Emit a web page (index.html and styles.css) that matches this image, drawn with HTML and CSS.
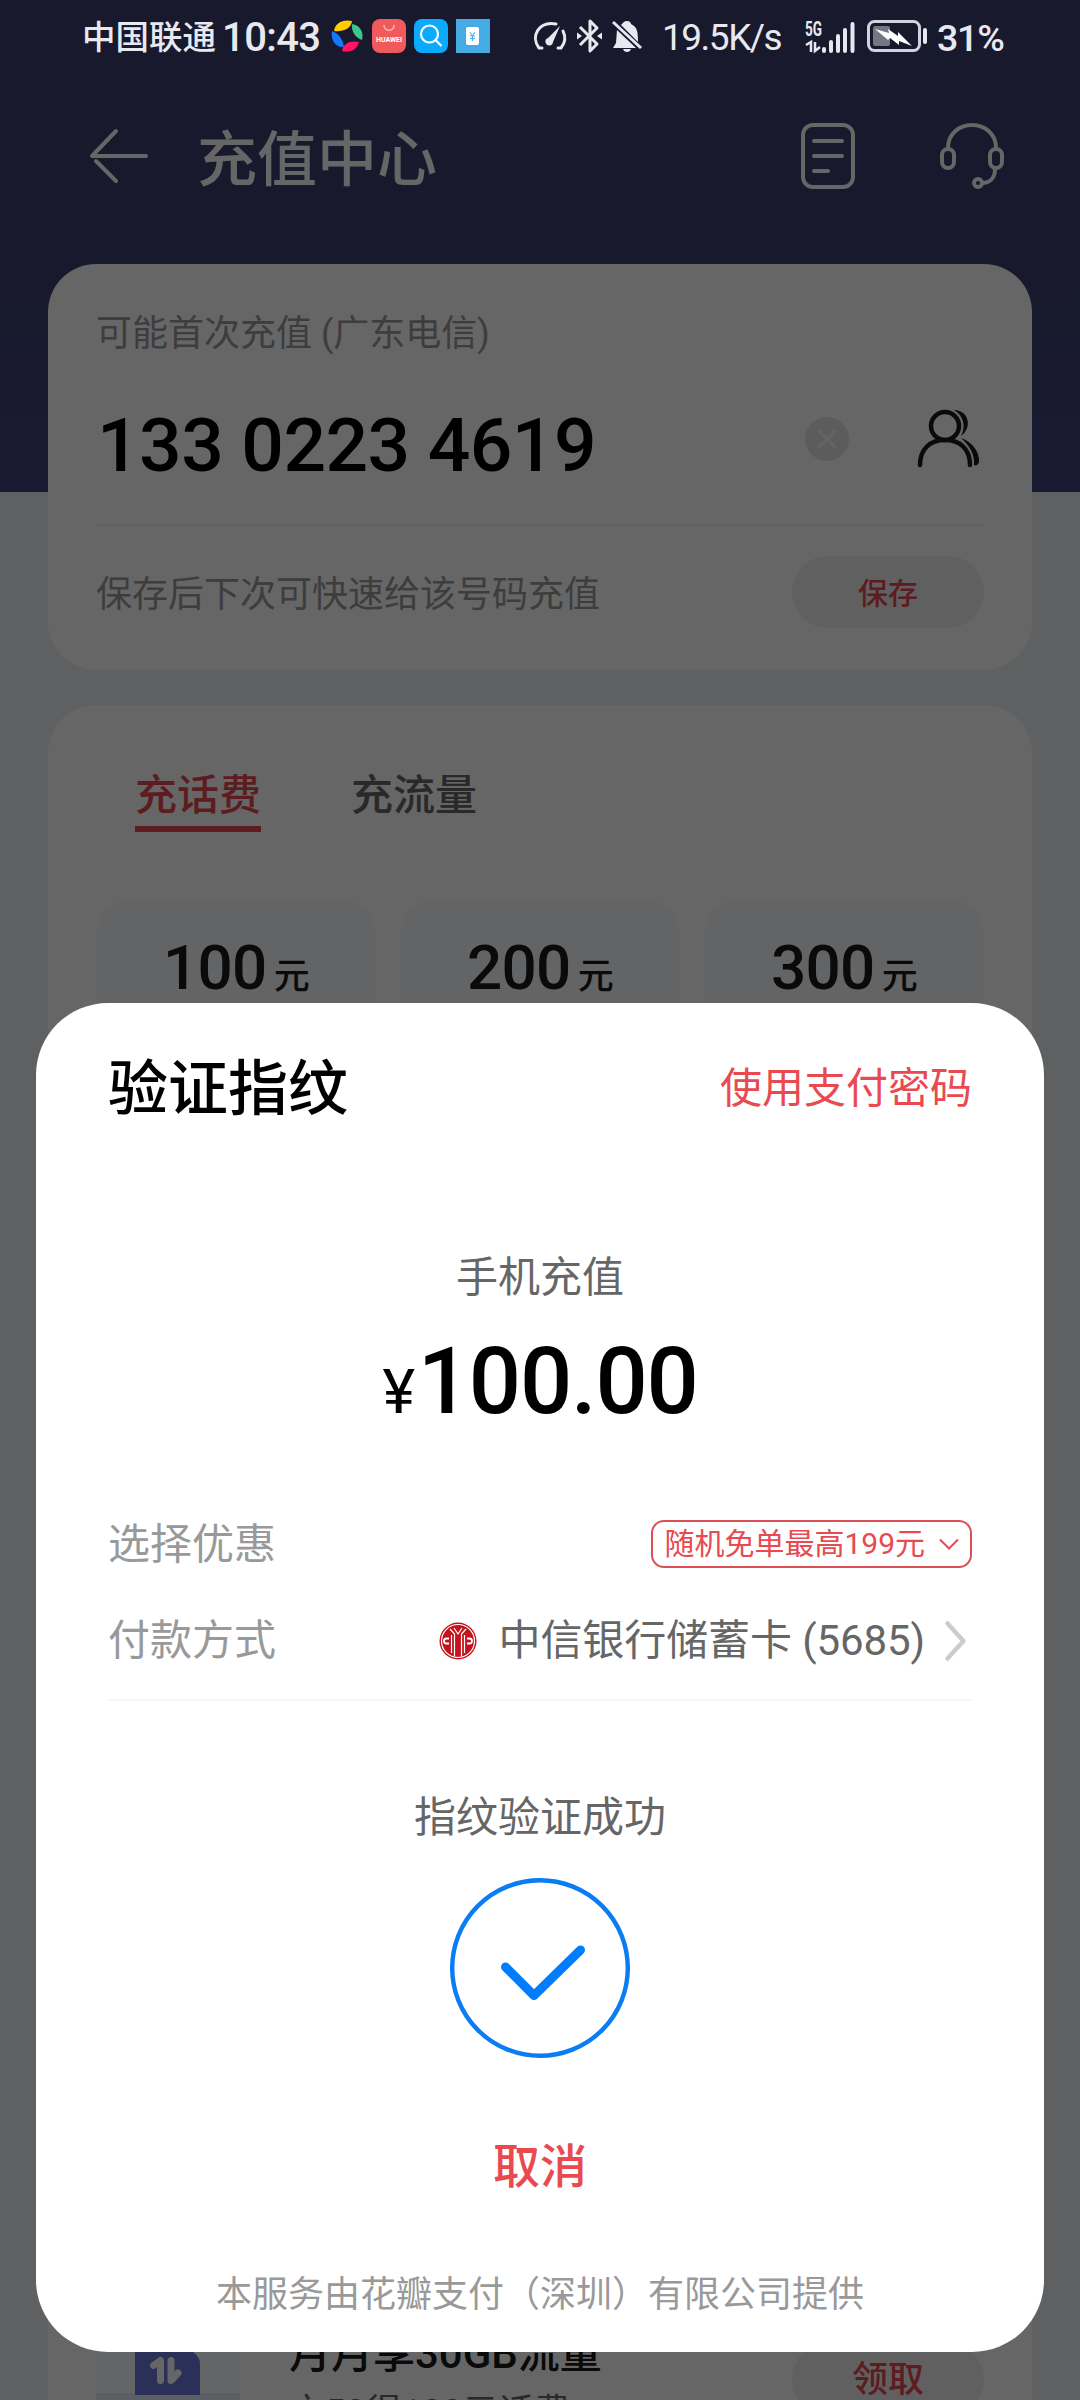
FILE: index.html
```html
<!DOCTYPE html>
<html lang="zh-CN">
<head>
<meta charset="utf-8">
<title>充值中心</title>
<link rel="stylesheet" href="styles.css">
</head>
<body>
<div class="screen">
  <main class="page">
    <header class="topbar">
      <svg class="back" width="60" height="60" viewBox="0 0 60 60"><path d="M27 5 3 30h54M7 35l20 20"/></svg>
      <h1 class="topbar-title">充值中心</h1>
      <svg class="topbar-icon" width="54" height="66" viewBox="0 0 54 66"><rect x="2" y="2" width="50" height="62" rx="10"/><path d="M13 18h28M13 33h28M13 48h14"/></svg>
      <svg class="topbar-icon headset" width="66" height="66" viewBox="0 0 66 66"><path d="M9 25C9 11 20 2 33 2s24 9 24 23"/><rect x="3" y="26" width="12" height="19" rx="6"/><rect x="51" y="26" width="12" height="19" rx="6"/><path d="M56 46c0 9-5 14-13 14"/><circle cx="39" cy="60" r="4"/></svg>
    </header>

    <section class="card phone-card">
      <p class="hint">可能首次充值 (广东电信)</p>
      <div class="number-row">
        <span class="number">133 0223 4619</span>
        <svg class="clear" width="44" height="44" viewBox="0 0 44 44"><circle cx="22" cy="22" r="22"/><path d="m14 14 16 16M30 14 14 30"/></svg>
        <svg class="contacts" width="64" height="60" viewBox="0 0 64 60"><circle cx="28" cy="17" r="14"/><path d="M3 56C3 40 13 31 28 31s25 9 25 25"/><path class="shade" d="M37 1c16 1 18 18 7 26 5-9 3-20-7-26ZM44 29c12 4 19 15 18 24-1 3-3 4-5 3 1-11-5-20-13-27Z"/></svg>
      </div>
      <div class="save-row">
        <p class="hint save-hint">保存后下次可快速给该号码充值</p>
        <button class="pill">保存</button>
      </div>
    </section>

    <section class="card plans-card">
      <nav class="tabs">
        <span class="tab active">充话费</span>
        <span class="tab">充流量</span>
      </nav>
      <div class="plans">
        <div class="plan">100<small>元</small></div>
        <div class="plan">200<small>元</small></div>
        <div class="plan">300<small>元</small></div>
      </div>
      <div class="promo">
        <svg class="promo-art" width="144" height="144" viewBox="0 0 144 144"><rect width="144" height="144" fill="#fafcff"/><rect y="95" width="144" height="49" fill="#e6eaf8"/><path d="M39 20h48l11 35q6 4 6 11v31H39Z" fill="#6b78dc"/><path d="m57.500 67.500 7-5v20M75 62.500v20l7-7.500" fill="none" stroke="#fff" stroke-width="7" stroke-linecap="round" stroke-linejoin="round"/></svg>
        <div class="promo-text">
          <p class="promo-title">月月享30GB流量</p>
          <p class="promo-sub">充50得100元话费</p>
        </div>
        <button class="pill claim">领取</button>
      </div>
    </section>
  </main>

  <div class="scrim"></div>

  <div class="statusbar">
    <span class="carrier">中国联通</span>
    <span class="time">10:43</span>
    <svg class="app-petals" width="34" height="34" viewBox="0 0 34 34"><path d="M4 12C5 4 13 0 22 2c-1 8-9 11-18 10Z" fill="#ffcd00"/><path d="M22 5c8 1 12 8 10 16-6-2-11-8-10-16Z" fill="#3cc88c"/><path d="M29 23c-2 8-9 11-17 9 1-8 9-11 17-9Z" fill="#ff1464"/><path d="M2 12c6 2 11 8 12 16C6 29 0 21 2 12Z" fill="#1478ff"/></svg>
    <svg class="app-huawei" width="34" height="34" viewBox="0 0 34 34"><rect width="34" height="34" rx="8" fill="#f05a5c"/><path d="M12 6c0 7 10 7 10 0" fill="none" stroke="#ffb4b4" stroke-width="1.500"/><text x="17" y="22.500" text-anchor="middle" textLength="26" class="app-label">HUAWEI</text></svg>
    <svg class="app-search" width="34" height="34" viewBox="0 0 34 34"><rect width="34" height="34" rx="8" fill="#0aaaff"/><circle cx="15.500" cy="15" r="8.500" fill="none" stroke="#fff" stroke-width="2.200"/><path d="m21.500 21 6 6" stroke="#fff" stroke-width="2.200"/></svg>
    <svg class="app-pay" width="34" height="34" viewBox="0 0 34 34"><rect width="34" height="34" fill="#46aae4"/><rect x="10" y="8" width="13" height="18" rx="2" fill="#fff"/><path d="m14 13 2.500 4 2.500-4M16.500 17v5M14 17h5M14 19.500h5" fill="none" stroke="#46aae4"/></svg>
    <svg class="gauge" width="34" height="34" viewBox="0 0 34 34"><path d="M6 29C-3 17 6 2 23 5M30 12c3 6 2 12-2 17h-3M6 29h3" fill="none" stroke="#e8e9f0" stroke-width="3" stroke-linecap="round"/><path d="M27 7 15 19a3.800 3.800 0 1 0 5 4Z" fill="#e8e9f0"/></svg>
    <svg class="bt" width="26" height="34" viewBox="0 0 26 34"><path d="m3 8 17 17-7 7V2l7 7L3 26" fill="none" stroke="#e8e9f0" stroke-width="3" stroke-linejoin="round"/><path d="M0 13.500 5 17 0 20.500ZM25 13.500 20 17l5 3.500Z" fill="#e8e9f0"/></svg>
    <svg class="bell" width="32" height="34" viewBox="0 0 32 34"><path d="M6 11 25 29H2l3-5ZM10 6c2-2 3-4 6-4s4 2 4 3c6 3 7 7 7 18ZM12 30h8c-1 4-7 4-8 0Z" fill="#e8e9f0"/><path d="m2 3 28 26" stroke="#e8e9f0" stroke-width="3"/></svg>
    <span class="speed">19.5K/s</span>
    <svg class="signal" width="52" height="34" viewBox="0 0 52 34"><text x="0" y="17" textLength="17" lengthAdjust="spacingAndGlyphs" class="net-label">5G</text><path d="m1 26 5-3v10M10 23v9l5-4" fill="none" stroke="#e8e9f0" stroke-width="2.500"/><path d="M19 30v2M26 23v9M33 17v15M40 11v21M47.500 5v27" stroke="#e8e9f0" stroke-width="4" stroke-linecap="round"/></svg>
    <svg class="battery" width="62" height="34" viewBox="0 0 62 34"><rect x="1.500" y="2.500" width="51" height="29" rx="6" fill="none" stroke="#d2d3dc" stroke-width="3"/><rect x="6" y="7" width="17" height="20" rx="2" fill="#75767f"/><rect x="56" y="9" width="4" height="16" rx="2" fill="#e8e9f0"/><path d="m8 10 14 4-1-4 10 7v-4l14 14-13-5v4l-9-7-2 2Z" fill="#fff"/></svg>
    <span class="percent">31%</span>
  </div>

  <section class="sheet">
    <div class="sheet-head">
      <h2 class="sheet-title">验证指纹</h2>
      <a class="link">使用支付密码</a>
    </div>
    <p class="merchant">手机充值</p>
    <p class="amount"><span class="yen">¥</span>100.00</p>
    <div class="row offer-row">
      <span class="row-label">选择优惠</span>
      <span class="coupon">随机免单最高199元<svg width="20" height="12" viewBox="0 0 20 12"><path d="m1 1.500 9 9 9-9"/></svg></span>
    </div>
    <div class="row pay-row">
      <span class="row-label">付款方式</span>
      <span class="method">
        <svg class="bank" width="38" height="38" viewBox="0 0 38 38"><circle cx="19" cy="19" r="18.500" fill="#c3141e"/><g fill="none" stroke="#fff" stroke-width="1.200"><circle cx="19" cy="19" r="16.500"/><path d="M11 7l4.500 5v22M27 7l-4.500 5v22M12.500 13v18M25.500 13v18M15 6l4 6 4-6"/></g><path d="M10 16.500H7.500a2.500 2.500 0 0 0 0 5H10M28 16.500h2.500a2.500 2.500 0 0 1 0 5H28" fill="none" stroke="#fff" stroke-width="1.800"/></svg>
        <span class="bank-name">中信银行储蓄卡 (5685)</span>
        <svg class="chevron" width="22" height="40" viewBox="0 0 22 40"><path d="m2.500 2.500 16 17.500-16 17.500"/></svg>
      </span>
    </div>
    <hr class="rule">
    <p class="result">指纹验证成功</p>
    <svg class="success" width="180" height="180" viewBox="0 0 180 180"><circle cx="90" cy="90" r="87.800"/><path d="m55.500 89 28.500 28.500L130.500 72"/></svg>
    <button class="cancel">取消</button>
    <p class="provider">本服务由花瓣支付（深圳）有限公司提供</p>
  </section>
</div>
</body>
</html>
```
FILE: styles.css
```css
* { box-sizing: border-box; margin: 0; padding: 0; }

body {
  width: 1080px;
  height: 2400px;
  overflow: hidden;
  font-family: Roboto, "Noto Sans CJK SC", sans-serif;
}

button { border: 0; background: none; font: inherit; }
svg { display: block; flex: none; overflow: visible; }

.screen { position: relative; width: 1080px; height: 2400px; overflow: hidden; }

/* Recharge page */
.page {
  height: 2400px;
  overflow: hidden;
  padding: 72px 48px 0;
  background: linear-gradient(#3c3f6e, #3c3f6e 230px, #42457e 492px) 0 0 / 100% 492px no-repeat #ecf0f4;
}
.topbar { display: flex; align-items: center; height: 168px; padding-left: 41px; margin-bottom: 24px; color: #fff; }
.back, .topbar-icon { fill: none; stroke: #fff; stroke-width: 4; stroke-linecap: round; stroke-linejoin: round; }
.topbar-title { flex: 1; margin-left: 48px; padding-top: 10px; font-size: 60px; font-weight: 500; line-height: 80px; }
.headset { margin-left: 84px; margin-right: 27px; }

.card { background: #fff; border-radius: 48px; padding: 0 48px; }
.phone-card { height: 406px; padding-top: 46px; }
.hint { font-size: 36px; line-height: 48px; color: #999; }
.number-row { display: flex; align-items: center; height: 90px; margin-top: 42px; }
.number { flex: 1; padding-left: 1px; font-size: 75px; font-weight: 500; line-height: 90px; letter-spacing: -.55px; }
.clear { margin: 0 68px 12px 0; }
.clear circle { fill: #e6e6e6; }
.clear path { fill: none; stroke: #fafafa; stroke-width: 3; stroke-linecap: round; }
.contacts { margin: 0 3px 12px 0; fill: none; stroke: #1a1a1a; stroke-width: 4.5; stroke-linecap: round; }
.contacts .shade { fill: #1a1a1a; stroke: none; }
.save-row { display: flex; justify-content: space-between; margin-top: 34px; padding-top: 30px; border-top: 2px solid #f0f0f2; }
.save-hint { line-height: 78px; height: 72px; }
.pill { width: 192px; height: 72px; border-radius: 36px; background: #f0f0f0; color: #e84a50; font-size: 30px; font-weight: 500; line-height: 75px; }

.plans-card { height: 1800px; margin-top: 35px; padding-top: 60px; }
.tabs { display: flex; gap: 90px; padding-left: 39px; }
.tab { border-bottom: 6px solid transparent; font-size: 42px; font-weight: 500; line-height: 61px; color: #666; }
.tab.active { color: #e84a50; border-color: #e84a50; }
.plans { display: grid; grid-template-columns: repeat(3, 1fr); gap: 24px; margin-top: 67px; }
.plan { height: 130px; border-radius: 36px 36px 0 0; background: #f7f9fc; color: #1a1a1a; font-size: 62px; font-weight: 500; line-height: 138px; letter-spacing: -.7px; text-align: center; }
.plan small { margin-left: 7px; font-size: 36px; font-weight: 500; }
.promo { display: flex; align-items: flex-start; margin-top: 1269px; }
.promo-text { flex: 1; margin: 28px 0 0 49px; }
.promo-title { font-size: 42px; font-weight: 500; line-height: 56px; color: #1a1a1a; }
.promo-sub { margin-top: 7px; font-size: 36px; line-height: 48px; color: #666; }
.claim { margin-top: 45px; font-size: 36px; }

.scrim { position: absolute; inset: 0; background: rgba(0, 0, 0, .6); }

/* System status bar */
.statusbar { position: absolute; top: 0; left: 0; display: flex; align-items: center; width: 1080px; height: 72px; padding-left: 82px; color: #e8e9f0; white-space: nowrap; line-height: 72px; }
.carrier { width: 140px; padding-top: 4px; font-size: 33.5px; font-weight: 500; }
.time { width: 109px; padding-top: 4px; font-size: 40px; font-weight: 500; letter-spacing: -.6px; }
.app-huawei, .app-search, .app-pay { margin-left: 8px; }
.app-petals { margin-left: -1px; }
.app-label { fill: #fff; font-size: 7px; font-weight: 700; }
.gauge { margin-left: 43px; }
.bt { margin-left: 10px; }
.bell { margin-left: 8px; }
.speed { width: 142px; margin-left: 19px; padding-top: 4px; font-size: 37px; letter-spacing: -1.5px; }
.signal { margin-left: 1px; }
.net-label { fill: #e8e9f0; font-size: 20px; font-weight: 700; }
.battery { margin-left: 10px; }
.percent { margin-left: 8px; padding-top: 4px; font-size: 37.5px; font-weight: 500; letter-spacing: -1.2px; }

/* Payment sheet */
.sheet {
  position: absolute;
  top: 1003px;
  left: 36px;
  display: flex;
  flex-direction: column;
  width: 1008px;
  height: 1349px;
  padding: 39px 72px 0;
  border-radius: 72px;
  background: #fff;
  text-align: center;
  font-size: 42px;
  line-height: 60px;
  color: #666;
}
.sheet-head, .row { display: flex; justify-content: space-between; align-items: center; }
.sheet-head { height: 96px; }
.sheet-title { font-size: 60px; font-weight: 500; line-height: 96px; color: #000; }
.link { margin-bottom: 2px; color: #e84a50; }
.merchant { margin-top: 110px; }
.amount { height: 110px; margin-top: 19px; font-size: 92px; font-weight: 500; line-height: 110px; letter-spacing: -1.2px; color: #000; }
.yen { margin-right: 4px; font-size: 62px; font-weight: 400; line-height: 1; }
.row { height: 60px; }
.row-label { color: #999; }
.offer-row { margin-top: 78px; }
.coupon { display: flex; align-items: center; gap: 14px; height: 48px; margin-bottom: 2px; padding: 0 11px; border: 2px solid #dc5055; border-radius: 13px; color: #e84a50; font-size: 30px; line-height: 46px; white-space: nowrap; }
.coupon svg { fill: none; stroke: #e84a50; stroke-width: 2; }
.pay-row { margin-top: 36px; }
.method { display: flex; align-items: center; }
.bank { margin-right: 22px; }
.bank-name { letter-spacing: -.1px; }
.chevron { margin: 0 5px 0 20px; fill: none; stroke: #ccc; stroke-width: 4.5; stroke-linecap: round; stroke-linejoin: round; }
.rule { height: 2px; margin-top: 28px; border: 0; background: #f6f6f6; }
.result { margin-top: 87px; }
.success { align-self: center; margin-top: 30px; fill: none; stroke: #0a7df5; stroke-width: 4.4; }
.success path { stroke: #007dff; stroke-width: 9; stroke-linecap: round; stroke-linejoin: round; }
.cancel { align-self: center; margin-top: 76px; font-size: 47px; font-weight: 500; line-height: 66px; color: #e84a50; }
.provider { margin-top: 70px; font-size: 36px; line-height: 50px; color: #999; }
```
